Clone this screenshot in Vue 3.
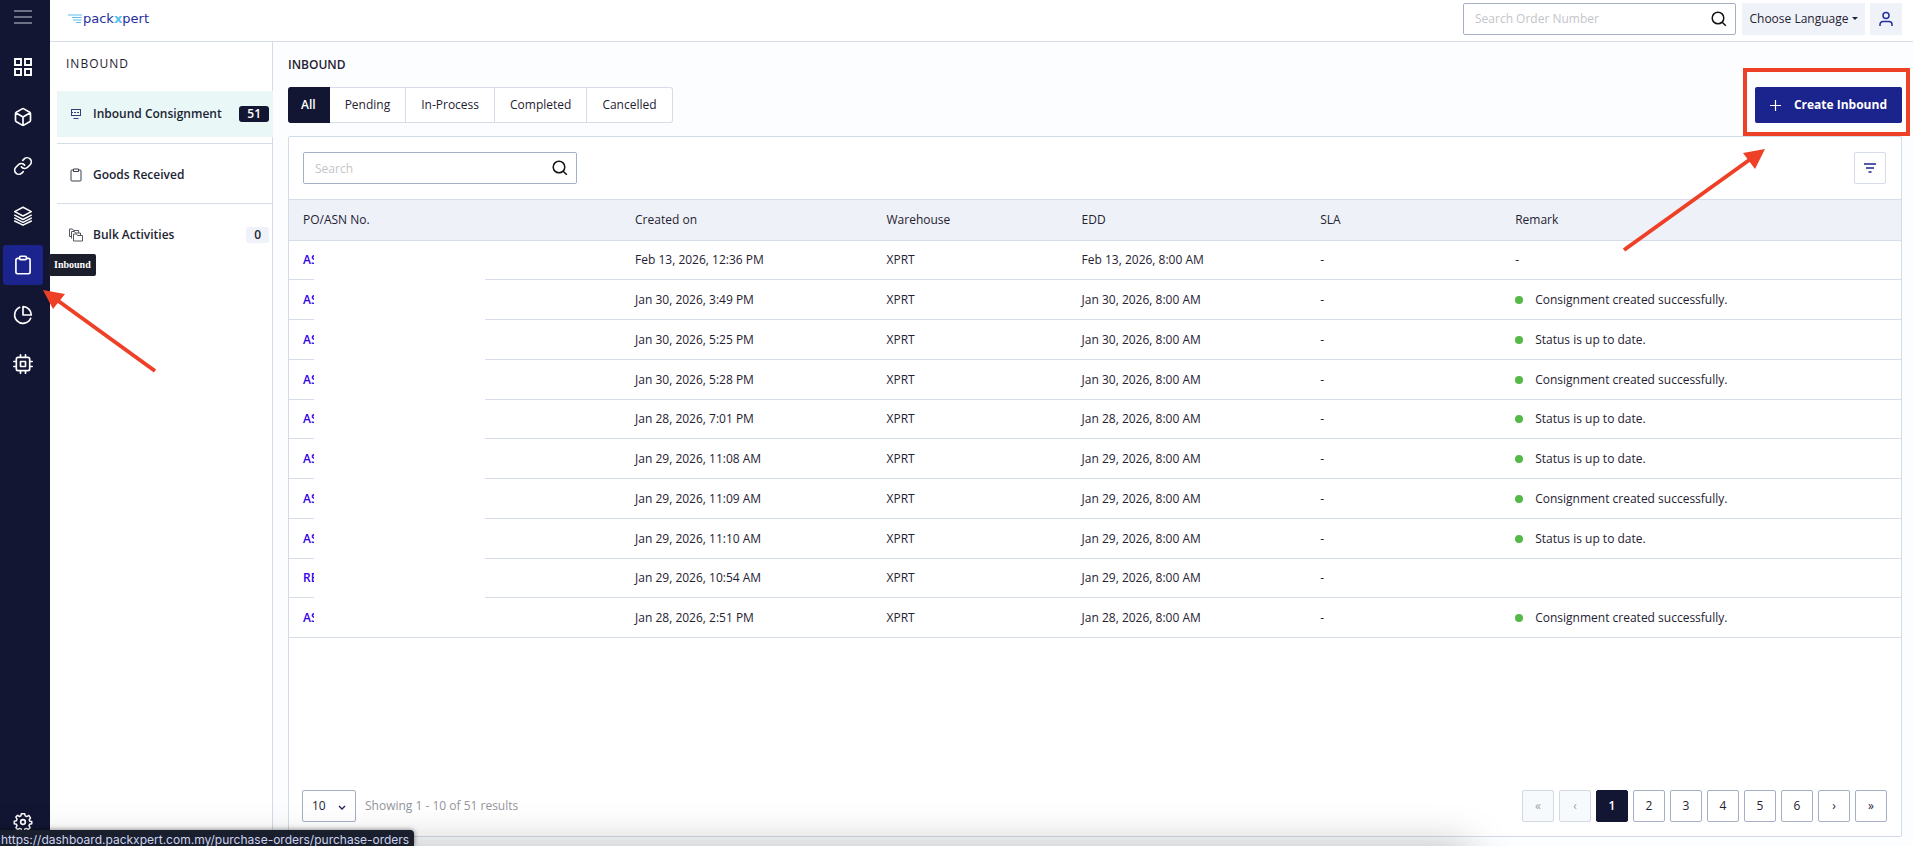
<script setup>
import { ref } from 'vue'

const search = ref('')
const orderSearch = ref('')
const pageSize = ref('10')
const tabs = ['All', 'Pending', 'In-Process', 'Completed', 'Cancelled']
const activeTab = ref('All')
const columns = ['PO/ASN No.', 'Created on', 'Warehouse', 'EDD', 'SLA', 'Remark']
const created = 'Consignment created successfully.'
const upToDate = 'Status is up to date.'
const rows = [
  { ref: 'AS', created: 'Feb 13, 2026, 12:36 PM', edd: 'Feb 13, 2026, 8:00 AM', none: true },
  { ref: 'AS', created: 'Jan 30, 2026, 3:49 PM', edd: 'Jan 30, 2026, 8:00 AM', remark: created },
  { ref: 'AS', created: 'Jan 30, 2026, 5:25 PM', edd: 'Jan 30, 2026, 8:00 AM', remark: upToDate },
  { ref: 'AS', created: 'Jan 30, 2026, 5:28 PM', edd: 'Jan 30, 2026, 8:00 AM', remark: created },
  { ref: 'AS', created: 'Jan 28, 2026, 7:01 PM', edd: 'Jan 28, 2026, 8:00 AM', remark: upToDate },
  { ref: 'AS', created: 'Jan 29, 2026, 11:08 AM', edd: 'Jan 29, 2026, 8:00 AM', remark: upToDate },
  { ref: 'AS', created: 'Jan 29, 2026, 11:09 AM', edd: 'Jan 29, 2026, 8:00 AM', remark: created },
  { ref: 'AS', created: 'Jan 29, 2026, 11:10 AM', edd: 'Jan 29, 2026, 8:00 AM', remark: upToDate },
  { ref: 'RE', created: 'Jan 29, 2026, 10:54 AM', edd: 'Jan 29, 2026, 8:00 AM' },
  { ref: 'AS', created: 'Jan 28, 2026, 2:51 PM', edd: 'Jan 28, 2026, 8:00 AM', remark: created },
]
const pages = ['«', '‹', '1', '2', '3', '4', '5', '6', '›', '»']
</script>

<template>
  <div class="app">
    <nav class="rail" aria-label="Main">
      <button class="rail-menu" type="button" aria-label="Menu">
        <svg width="18" height="14" viewBox="0 0 18 14"><path d="M0 1h18M0 7h18M0 13h18" stroke="#8d8fa3" stroke-width="1.6" /></svg>
      </button>
      <a href="#" class="rail-item" aria-label="Dashboard">
        <svg class="ico" viewBox="0 0 20 20"><path d="M2 2h6v6H2zM12 2h6v6h-6zM2 12h6v6H2zM12 12h6v6h-6z" stroke-width="1.9" stroke-linejoin="miter" /></svg>
      </a>
      <a href="#" class="rail-item" aria-label="Products">
        <svg class="ico" viewBox="0 0 24 24"><path d="M21 16V8a2 2 0 0 0-1-1.73l-7-4a2 2 0 0 0-2 0l-7 4A2 2 0 0 0 3 8v8a2 2 0 0 0 1 1.73l7 4a2 2 0 0 0 2 0l7-4A2 2 0 0 0 21 16zM3.3 7L12 12l8.700-5M12 22V12" /></svg>
      </a>
      <a href="#" class="rail-item" aria-label="Integrations">
        <svg class="ico" viewBox="0 0 24 24"><path d="M10 13a5 5 0 0 0 7.540.540l3-3a5 5 0 0 0-7.070-7.070l-1.720 1.710M14 11a5 5 0 0 0-7.540-.540l-3 3a5 5 0 0 0 7.070 7.070l1.710-1.710" /></svg>
      </a>
      <a href="#" class="rail-item" aria-label="Inventory">
        <svg class="ico" viewBox="0 0 24 24"><path d="M12 1.500L2 6.800l10 5.200 10-5.200zM2 11l10 5.200L22 11M2 14.500l10 5.200 10-5.200M2 18l10 5 10-5" stroke-width="1.700" /></svg>
      </a>
      <a href="#" class="rail-item current" aria-label="Inbound">
        <svg class="ico" viewBox="0 0 24 24"><path d="M16 4h2.500a2 2 0 0 1 2 2v14.500a2 2 0 0 1-2 2h-13a2 2 0 0 1-2-2V6a2 2 0 0 1 2-2H8M9 1.500h6a1 1 0 0 1 1 1v2a1 1 0 0 1-1 1H9a1 1 0 0 1-1-1v-2a1 1 0 0 1 1-1z" /></svg>
        <span class="tip">Inbound</span>
      </a>
      <a href="#" class="rail-item" aria-label="Reports">
        <svg class="ico" viewBox="0 0 24 24"><path d="M21.200 15.900A10 10 0 1 1 8 2.800M22 12A10 10 0 0 0 12 2v10z" /></svg>
      </a>
      <a href="#" class="rail-item" aria-label="System">
        <svg class="ico" viewBox="0 0 24 24"><path d="M6 4h12a2 2 0 0 1 2 2v12a2 2 0 0 1-2 2H6a2 2 0 0 1-2-2V6a2 2 0 0 1 2-2zM9 9h6v6H9zM9 1v3M15 1v3M9 20v3M15 20v3M20 9h3M20 15h3M1 9h3M1 15h3" /></svg>
      </a>
      <a href="#" class="rail-item settings" aria-label="Settings">
        <svg class="ico" viewBox="0 0 24 24"><circle cx="12" cy="12" r="2.800" /><path d="M10 2h4l.600 2.600 2 .900L19 4.100 21 7l-1.500 2.300.600 1.700 2.400.500v2.500l-2.600.800-.700 1.600L20.500 19l-2 2-2.600-1.300-1.700.600L13.500 23h-3l-.700-2.700-1.800-.700L5.500 21l-2-2 1.300-2.600-.700-1.600L1.500 14v-3l2.600-.600.700-1.800L3.400 6l2-2 2.500 1.400 1.600-.700z" stroke-width="1.800" /></svg>
      </a>
    </nav>

    <div class="shell">
      <header class="top">
        <a href="#" class="logo" aria-label="packxpert">
          <svg width="14" height="10" viewBox="0 0 14 10"><path d="M0 1h14M4 3.500h9.500M5 6h8.500M8 8.500h5" stroke="#58bde8" stroke-width="1" /></svg>
          <span>pack<b>x</b>pert</span>
        </a>
        <label class="field order">
          <input v-model="orderSearch" type="text" placeholder="Search Order Number" aria-label="Search Order Number" />
          <svg width="16" height="16" viewBox="0 0 16 16"><circle cx="7" cy="7" r="5.800" /><path d="M11.200 11.200l3.600 3.600" /></svg>
        </label>
        <button type="button" class="lang">Choose Language<i class="caret"></i></button>
        <button type="button" class="user" aria-label="Account">
          <svg width="14" height="16" viewBox="0 0 14 16"><circle cx="7" cy="4.500" r="3" /><path d="M1 15v-1.500a3 3 0 0 1 3-3h6a3 3 0 0 1 3 3V15" /></svg>
        </button>
      </header>

      <div class="body">
        <aside class="sub">
          <h2>INBOUND</h2>
          <ul>
            <li>
              <a href="#" class="active">
                <svg width="12" height="12" viewBox="0 0 12 12" fill="none" stroke="#3b3b78"><path d="M1 1.500h10M1.500 1v7M10.500 1v7M1 7.500h10M3.500 10.500h5" /><path d="M1 4.500h10" stroke-dasharray="2 1" /></svg>
                <span>Inbound Consignment</span><em class="count dark">51</em>
              </a>
            </li>
            <li>
              <a href="#">
                <svg width="12" height="14" viewBox="0 0 12 14" fill="none" stroke="#3a3c48"><path d="M3.500 2H2a1 1 0 0 0-1 1v9a1 1 0 0 0 1 1h8a1 1 0 0 0 1-1V3a1 1 0 0 0-1-1H8.500M3.500 1h5v2.500h-5z" /></svg>
                <span>Goods Received</span>
              </a>
            </li>
            <li>
              <a href="#">
                <svg width="14" height="14" viewBox="0 0 14 14" fill="none" stroke="#55575f"><path d="M4.500 6h3l1 1.500h5V13h-9zM2.500 10.500V3.500h3l1 1.500h5v2.500M2.500 8.500h-2V1h3l1 1.500h5V5" /></svg>
                <span>Bulk Activities</span><em class="count">0</em>
              </a>
            </li>
          </ul>
        </aside>

        <main class="main">
          <h1>INBOUND</h1>
          <div class="bar">
            <div class="tabs">
              <button v-for="t in tabs" :key="t" type="button" :class="{ on: t === activeTab }" @click="activeTab = t">{{ t }}</button>
            </div>
            <button type="button" class="create">
              <svg width="11" height="11" viewBox="0 0 11 11"><path d="M5.500 0v11M0 5.500h11" stroke="#fff" stroke-width="1.200" /></svg>
              Create Inbound
            </button>
          </div>

          <section class="panel">
            <div class="tools">
              <label class="field">
                <input v-model="search" type="text" placeholder="Search" aria-label="Search" />
                <svg width="16" height="16" viewBox="0 0 16 16"><circle cx="7" cy="7" r="5.800" /><path d="M11.200 11.200l3.600 3.600" /></svg>
              </label>
              <button type="button" class="filter" aria-label="Filter">
                <svg width="12" height="10" viewBox="0 0 12 10"><path d="M0 1h12M2 5h8M4.500 9h3" stroke="#1c2390" stroke-width="1.300" /></svg>
              </button>
            </div>
            <table>
              <thead>
                <tr><th v-for="c in columns" :key="c" scope="col">{{ c }}</th></tr>
              </thead>
              <tbody>
                <tr v-for="(r, i) in rows" :key="i">
                  <td class="po"><a href="#">{{ r.ref }}</a><span class="mask"></span></td>
                  <td>{{ r.created }}</td>
                  <td>XPRT</td>
                  <td>{{ r.edd }}</td>
                  <td>-</td>
                  <td>
                    <template v-if="r.none">-</template>
                    <span v-else-if="r.remark" class="remark"><i></i>{{ r.remark }}</span>
                  </td>
                </tr>
              </tbody>
            </table>
            <footer class="foot">
              <div class="size">
                <select v-model="pageSize" aria-label="Results per page"><option>10</option><option>25</option><option>50</option></select>
                <svg width="8" height="6" viewBox="0 0 8 6"><path d="M1 1l3 3 3-3" fill="none" stroke="#23235f" stroke-width="1.400" /></svg>
              </div>
              <span class="showing">Showing 1 - 10 of 51 results</span>
              <nav class="pages" aria-label="Pages">
                <button v-for="(p, i) in pages" :key="p" type="button" :disabled="i < 2" :class="{ on: p === '1' }">{{ p }}</button>
              </nav>
            </footer>
          </section>
        </main>
      </div>
    </div>

    <div class="shade"><div></div></div>
    <div class="status">https://dashboard.packxpert.com.my/purchase-orders/purchase-orders</div>
    <svg class="note note-left" width="120" height="90" viewBox="40 285 120 90"><path d="M155 371L57 300" stroke="#ee4026" stroke-width="4" /><path d="M43 290l22 4-12 15z" fill="#ee4026" /></svg>
    <svg class="note note-right" width="300" height="190" viewBox="1613 65 300 190"><rect x="1745" y="70" width="163" height="64" fill="none" stroke="#ee4026" stroke-width="4" /><path d="M1624 250L1752 158" stroke="#ee4026" stroke-width="4" /><path d="M1765 149l-22 4 12 16z" fill="#ee4026" /></svg>
  </div>
</template>

<style>
body { margin: 0; }
</style>

<style scoped>
.app {
  position: relative;
  display: flex;
  min-height: 100vh;
  overflow: hidden;
  background: #fcfdff;
  color: #1f2233;
  font: 12px/16px "Open Sans", "Noto Sans", sans-serif;
}
.app *, .app *::before { box-sizing: border-box; }
button, input, select { font: inherit; color: inherit; margin: 0; }
button { padding: 0; border: 0; background: none; cursor: pointer; }
a { color: inherit; text-decoration: none; }

.rail {
  display: flex;
  flex-direction: column;
  gap: 10px;
  width: 50px;
  padding: 7px 0 5px 3px;
  background: #131633;
}
.rail-menu { flex: none; width: 40px; height: 20px; margin-bottom: 10px; }
.rail-menu svg { display: block; margin: 0 auto; }
.rail-item {
  position: relative;
  display: flex;
  flex: none;
  align-items: center;
  justify-content: center;
  width: 40px;
  height: 40px;
  border-radius: 3px;
}
.rail-item:nth-of-type(even) { margin-bottom: -1px; }
.rail-item.current { background: #1b238c; }
.rail-item.settings { margin-top: auto; }
.ico { width: 20px; height: 20px; fill: none; stroke: #fff; stroke-width: 2; stroke-linejoin: round; stroke-linecap: round; }
.tip {
  position: absolute;
  left: 46px;
  top: 9px;
  z-index: 3;
  padding: 3px 5px;
  border-radius: 2px;
  background: #1d1e2c;
  color: #fff;
  font: 700 10px/16px "Liberation Serif", serif;
}

.shell { flex: 1; min-width: 0; display: flex; flex-direction: column; }
.top {
  display: flex;
  align-items: center;
  height: 42px;
  padding: 0 11px 4px 18px;
  border-bottom: 1px solid #d6dce9;
  background: #fff;
}
.logo { display: flex; align-items: center; gap: 1px; margin-right: auto; color: #24309c; font: 13px/16px "DejaVu Sans", sans-serif; }
.logo b { color: #58c2f0; }
.field { position: relative; display: block; width: 274px; }
.field.order { width: 273px; }
.field input {
  display: block;
  width: 100%;
  height: 32px;
  padding: 0 32px 0 11px;
  border: 1px solid #a5b0c5;
  border-radius: 2px;
  background: #fff;
  outline: 0;
}
.field input::placeholder { color: #c3c5c9; opacity: 1; }
.field svg { position: absolute; right: 9px; top: 8px; fill: none; stroke: #111; stroke-width: 1.500; }
.lang, .user { height: 32px; background: #eff2f8; }
.lang { width: 123px; margin: 0 5px 0 6px; }
.caret { display: inline-block; margin-left: 3px; vertical-align: 3px; border: 3px solid transparent; border-top-color: #1f2233; border-bottom: 0; }
.user { width: 32px; }
.user svg { display: block; margin: 0 auto; fill: none; stroke: #24309c; stroke-width: 1.500; }

.body { flex: 1; display: flex; }
.sub { width: 223px; padding-left: 7px; border-right: 1px solid #d3dbea; background: #fff; }
.sub h2 { margin: 14px 0 19px 9px; font-size: 12px; line-height: 16px; font-weight: 400; letter-spacing: 1px; }
.sub ul { margin: 0; padding: 0; list-style: none; }
.sub li { height: 60px; padding-top: 8px; border-bottom: 1px solid #d6dce9; }
.sub li:first-child { height: 53px; padding-top: 0; }
.sub li:last-child { border-bottom: 0; }
.sub li a {
  display: flex;
  align-items: center;
  height: 46px;
  margin-right: -1px;
  padding: 0 4px 0 12px;
  color: #1d2433;
  font-weight: 600;
}
.sub li a.active { background: #eaf7f7; }
.sub li svg { flex: none; width: 14px; margin-right: 10px; }
.count { margin-left: auto; padding: 0 8px; border-radius: 3px; background: #eff2f8; font-style: normal; }
.count.dark { background: #131633; color: #fff; }

.main { flex: 1; min-width: 0; display: flex; flex-direction: column; padding: 15px 11px 9px 15px; }
.main h1 { margin: 0 0 14px; font-size: 12px; line-height: 16px; font-weight: 600; }
.bar { display: flex; justify-content: space-between; margin-bottom: 13px; }
.tabs { display: flex; }
.tabs button {
  height: 36px;
  padding: 0 15px;
  border: 1px solid #d6dce9;
  border-left: 0;
  background: #fff;
}
.tabs button:first-child { padding: 0 13px; border-radius: 3px 0 0 3px; }
.tabs button:last-child { border-radius: 0 3px 3px 0; }
.tabs button.on { border-color: #131633; background: #131633; color: #fff; font-weight: 600; }
.create {
  display: flex;
  align-items: center;
  gap: 13px;
  height: 36px;
  padding: 0 15px;
  border-radius: 2px;
  background: #1b238c;
  color: #fff;
  font-weight: 700;
}

.panel { flex: 1; display: flex; flex-direction: column; border: 1px solid #d3dbea; border-radius: 2px; background: #fff; }
.tools { display: flex; justify-content: space-between; padding: 15px 15px 15px 14px; }
.filter { display: flex; align-items: center; justify-content: center; width: 32px; height: 32px; border: 1px solid #d6dce9; border-radius: 2px; }

table { width: 100%; table-layout: fixed; border-collapse: separate; border-spacing: 0; }
th, td { height: 40px; padding: 0 0 0 14px; border-bottom: 1px solid #d6dce9; text-align: left; font-weight: 400; }
tbody tr:nth-child(4n + 1) td { height: 39px; }
th { height: 42px; border-top: 1px solid #d6dce9; background: #eef1f7; font-weight: 500; }
th:nth-child(1) { width: 20.6%; }
th:nth-child(2) { width: 15.6%; }
th:nth-child(3) { width: 12.1%; }
th:nth-child(4) { width: 14.8%; }
th:nth-child(5) { width: 12.1%; }
.po { position: relative; }
.po a { color: #3300e6; font-weight: 600; }
.mask { position: absolute; left: 25px; top: 0; bottom: -1px; width: 171px; background: #fff; }
tr:last-child .mask { bottom: 0; }
.remark { display: flex; align-items: center; gap: 12px; }
.remark i { width: 8px; height: 8px; border-radius: 50%; background: #55b948; }

.foot { display: flex; align-items: center; margin-top: auto; padding: 14px 14px 14px 13px; }
.size { position: relative; }
.size select { display: block; width: 54px; height: 32px; padding: 0 9px; border: 1px solid #a5b0c5; border-radius: 2px; background: #fff; appearance: none; }
.size svg { position: absolute; right: 10px; top: 15px; pointer-events: none; }
.showing { margin-left: 9px; color: #94969c; }
.pages { display: flex; gap: 5px; margin-left: auto; }
.pages button { width: 32px; height: 32px; border: 1px solid #a5b0c5; border-radius: 2px; background: #fff; }
.pages button:disabled { border-color: #d3d8e2; background: #f6fafc; color: #a0a3a9; }
.pages button.on { border-color: #131633; background: #131633; color: #fff; font-weight: 600; }

.shade { position: absolute; left: 0; right: 0; bottom: 0; height: 60px; overflow: hidden; pointer-events: none; }
.shade div { position: absolute; left: -60px; top: 60px; width: 80%; height: 60px; box-shadow: 0 0 40px rgba(0, 0, 0, 0.26); }
.status {
  position: absolute;
  left: 0;
  bottom: 0;
  height: 16px;
  padding: 2px 5px 0 1px;
  overflow: hidden;
  border-radius: 0 4px 0 0;
  background: #1a1f2e;
  box-shadow: 0 0 5px rgba(0, 0, 0, 0.5);
  color: #cdd3ee;
  font: 12px/16px Inter, sans-serif;
}
.note { position: absolute; pointer-events: none; z-index: 4; }
.note-left { left: 40px; top: 285px; }
.note-right { right: 0; top: 65px; }
</style>
